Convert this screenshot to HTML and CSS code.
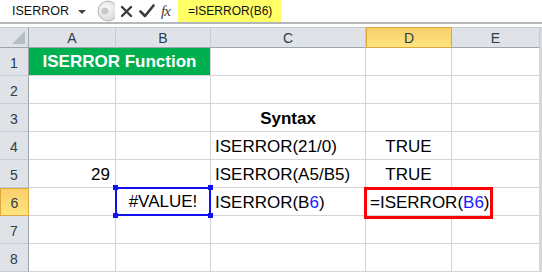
FILE: index.html
```html
<!DOCTYPE html>
<html lang="en">
<head>
  <meta charset="UTF-8">
  <title>ISERROR Function</title>
  <link rel="stylesheet" href="styles.css">
</head>
<body>
  <div class="formula-bar">
    <div class="name-box">
      <span class="name">ISERROR</span>
      <span class="caret"></span>
    </div>
    <svg class="grip" width="20" height="22" viewBox="0 0 20 22">
      <defs>
        <radialGradient id="g" cx="0.4" cy="0.4" r="0.7">
          <stop offset="0" stop-color="#ffffff"/>
          <stop offset="1" stop-color="#d2d2d2"/>
        </radialGradient>
      </defs>
      <circle cx="13" cy="11" r="10" fill="url(#g)" stroke="#b9b9b9"/>
      <circle cx="10" cy="11" r="3.5" fill="#c9c9c9"/>
    </svg>
    <div class="fx-buttons">
      <svg width="13" height="13" viewBox="0 0 13 13">
        <path d="M2 2 L11 11 M11 2 L2 11" stroke="#3c3c3c" stroke-width="2.4" stroke-linecap="round"/>
      </svg>
      <svg width="16" height="14" viewBox="0 0 16 14">
        <path d="M1.5 7.5 L6 12 L14.5 1.5" fill="none" stroke="#3c3c3c" stroke-width="2.6" stroke-linecap="round" stroke-linejoin="round"/>
      </svg>
      <span class="fx">fx</span>
    </div>
    <div class="formula">
      <span class="formula-hl">=ISERROR(B6)</span>
    </div>
  </div>

  <div class="sheet">
    <div class="hd corner"></div>
    <div class="hd col">A</div>
    <div class="hd col">B</div>
    <div class="hd col">C</div>
    <div class="hd col active">D</div>
    <div class="hd col">E</div>

    <div class="hd row">1</div>
    <div class="cell title">ISERROR Function</div>
    <div class="cell"></div>
    <div class="cell"></div>
    <div class="cell"></div>

    <div class="hd row">2</div>
    <div class="cell"></div><div class="cell"></div><div class="cell"></div><div class="cell"></div><div class="cell"></div>

    <div class="hd row">3</div>
    <div class="cell"></div><div class="cell"></div>
    <div class="cell center bold">Syntax</div>
    <div class="cell"></div><div class="cell"></div>

    <div class="hd row">4</div>
    <div class="cell"></div><div class="cell"></div>
    <div class="cell">ISERROR(21/0)</div>
    <div class="cell center">TRUE</div>
    <div class="cell"></div>

    <div class="hd row">5</div>
    <div class="cell right">29</div>
    <div class="cell"></div>
    <div class="cell">ISERROR(A5/B5)</div>
    <div class="cell center">TRUE</div>
    <div class="cell"></div>

    <div class="hd row active">6</div>
    <div class="cell"></div>
    <div class="cell center selected">#VALUE!
      <span class="handle tl"></span><span class="handle tr"></span>
      <span class="handle bl"></span><span class="handle br"></span>
    </div>
    <div class="cell">ISERROR(B<span class="ref">6</span>)</div>
    <div class="cell editing">=ISERROR(<span class="ref">B6</span>)<span class="cursor"></span>
      <span class="edit-box"></span>
    </div>

    <div class="hd row">7</div>
    <div class="cell"></div><div class="cell"></div><div class="cell"></div><div class="cell"></div><div class="cell"></div>

    <div class="hd row">8</div>
    <div class="cell"></div><div class="cell"></div><div class="cell"></div><div class="cell"></div><div class="cell"></div>
  </div>
</body>
</html>
```

FILE: styles.css
```css
body {
  margin: 0;
  background: #ffffff;
  font-family: "Liberation Sans", Arial, sans-serif;
  width: 542px;
  height: 274px;
  overflow: hidden;
}

.formula-bar {
  display: flex;
  align-items: stretch;
  height: 22px;
  border-bottom: 2px solid #b4b8bd;
  margin-bottom: 3px;
}
.name-box {
  width: 95px;
  display: flex;
  align-items: center;
  justify-content: space-between;
  padding: 0 9px 0 12px;
  box-sizing: border-box;
  font-size: 12.5px;
  color: #111;
}
.caret {
  width: 0;
  height: 0;
  border-left: 4px solid transparent;
  border-right: 4px solid transparent;
  border-top: 4px solid #444;
  margin-top: 1px;
}
.fx-buttons {
  display: flex;
  align-items: center;
  gap: 6px;
  padding-left: 5px;
  width: 63px;
  box-sizing: border-box;
}
.fx {
  font-family: "Liberation Serif", "Times New Roman", serif;
  font-style: italic;
  font-size: 15px;
  color: #3c3c3c;
  letter-spacing: -1px;
}
.formula {
  flex: 1;
  display: flex;
}
.formula-hl {
  background: #ffff66;
  width: 103px;
  box-sizing: border-box;
  padding-left: 10px;
  font-size: 12px;
  line-height: 22px;
  color: #111;
}

.sheet {
  display: grid;
  grid-template-columns: 29px 87px 95px 155px 86px 88px;
  grid-template-rows: 21px repeat(8, 28px);
  border-right: 2px solid #d6d9de;
  width: 540px;
}

.hd {
  background: #dfe3e8;
  color: #2d3b4b;
  font-size: 14px;
  display: flex;
  align-items: center;
  justify-content: center;
  box-sizing: border-box;
}
.hd.col {
  border-right: 1px solid #c5cbd3;
  border-bottom: 1px solid #9ea6b0;
  border-top: 1px solid #c5cbd3;
}
.hd.row {
  border-right: 1px solid #9ea6b0;
  border-bottom: 1px solid #c5cbd3;
  padding-top: 2px;
}
.hd.corner {
  border-right: 1px solid #9ea6b0;
  border-bottom: 1px solid #9ea6b0;
  border-top: 1px solid #c5cbd3;
  position: relative;
}
.hd.corner::after {
  content: "";
  position: absolute;
  right: 3px;
  bottom: 3px;
  border-left: 13px solid transparent;
  border-bottom: 13px solid #b8bec6;
}
.hd.active {
  background: linear-gradient(#f9cf6b, #fde57f);
  border-color: #e1a73c;
  border-style: solid;
  border-width: 1px;
}

.cell {
  border-right: 1px solid #d4d4d4;
  border-bottom: 1px solid #d4d4d4;
  box-sizing: border-box;
  font-size: 17px;
  line-height: 20px;
  color: #000;
  display: flex;
  align-items: flex-end;
  padding: 0 4px 2px 4px;
  white-space: nowrap;
}
.center {
  justify-content: center;
}
.right {
  justify-content: flex-end;
  padding-right: 5px;
}
.bold {
  font-weight: bold;
}
.title {
  grid-column: span 2;
  background: #00b050;
  color: #ffffff;
  font-weight: bold;
  justify-content: center;
  padding-bottom: 3px;
}
.ref {
  color: #1a1aff;
}

.selected {
  position: relative;
  border: 2px solid #1010f0;
  margin: -1px 0 0 -1px;
}
.handle {
  position: absolute;
  width: 5px;
  height: 5px;
  background: #1010f0;
}
.handle.tl { left: -4px; top: -4px; }
.handle.tr { right: -4px; top: -4px; }
.handle.bl { left: -4px; bottom: -4px; }
.handle.br { right: -4px; bottom: -4px; }

.editing {
  grid-column: span 2;
  position: relative;
  padding-left: 4px;
}
.cursor {
  display: inline-block;
  width: 1px;
  height: 22px;
  background: #000;
  margin-left: 1px;
  margin-bottom: -2px;
}
.edit-box {
  position: absolute;
  left: -2px;
  top: -1px;
  width: 129px;
  height: 32px;
  border: 3px solid #ff0000;
  box-sizing: border-box;
}
```
